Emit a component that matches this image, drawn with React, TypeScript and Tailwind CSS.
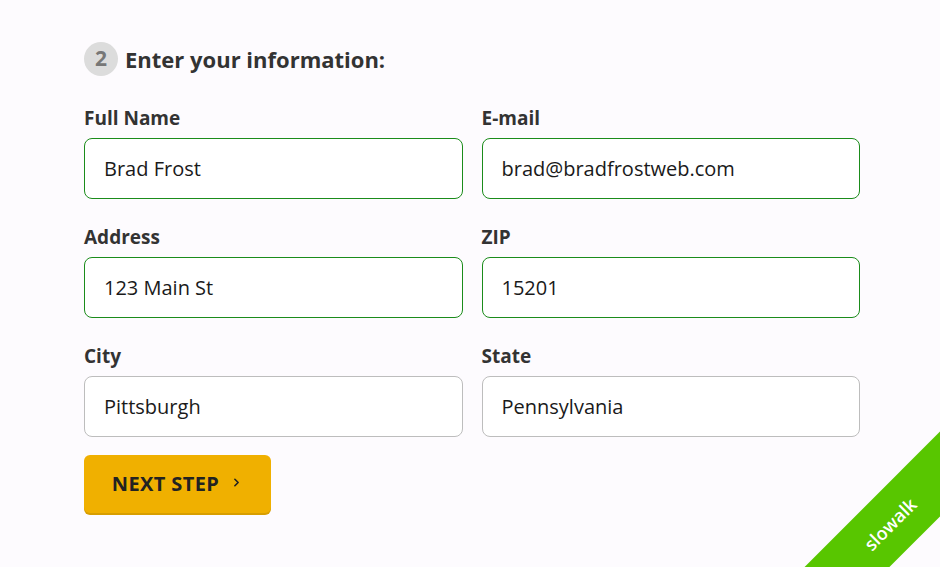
import { ChevronRight } from "lucide-react";

const fields = [
  { label: "Full Name", value: "Brad Frost", valid: true },
  { label: "E-mail", value: "brad@bradfrostweb.com", valid: true },
  { label: "Address", value: "123 Main St", valid: true },
  { label: "ZIP", value: "15201", valid: true },
  { label: "City", value: "Pittsburgh", valid: false },
  { label: "State", value: "Pennsylvania", valid: false },
];

const App = () => {
  return (
    <div className="relative h-[567px] w-[940px] overflow-hidden bg-[#fdfbfe] font-['Open_Sans',sans-serif] text-[#333]">
      <div className="pl-[84px] pt-[42px] w-[860px]">
        {/* step heading */}
        <div className="flex items-center gap-[7px]">
          <span className="flex h-[34px] w-[34px] items-center justify-center rounded-full bg-[#dcdcdc] text-[21px] font-bold text-[#777]">
            2
          </span>
          <h2 className="text-[22px] font-bold leading-none text-[#333]">Enter your information:</h2>
        </div>

        <div className="mt-[30px] grid grid-cols-2 gap-x-[19px] gap-y-[26px]">
          {fields.map((f) => (
            <div key={f.label}>
              <label className="mb-[8px] block text-[19px] font-bold leading-[24px] text-[#333]">{f.label}</label>
              <input
                defaultValue={f.value}
                className={
                  "block h-[61px] w-full rounded-[8px] bg-white px-[19px] text-[20px] text-[#1a1a1a] outline-none " +
                  (f.valid ? "border-[1.5px] border-[#1b8c1b]" : "border-[1.5px] border-[#bdbdbd]")
                }
              />
            </div>
          ))}
        </div>

        <button className="mt-[18px] flex h-[58px] w-[187px] items-center justify-center gap-[11px] rounded-[6px] bg-[#f0b000] pb-[1px] text-[20px] font-bold tracking-[0.4px] text-[#222] shadow-[0_2px_0_#d89e00]">
          NEXT STEP
          <ChevronRight size={13} strokeWidth={3} className="mb-[3px]" />
        </button>
      </div>

      {/* slowalk corner ribbon */}
      <div className="absolute left-[740px] top-[494px] flex h-[60px] w-[300px] -rotate-45 items-center justify-center bg-[#58c600]">
        <span className="text-[18px] font-semibold text-white">slowalk</span>
      </div>
    </div>
  );
};

export default App;
